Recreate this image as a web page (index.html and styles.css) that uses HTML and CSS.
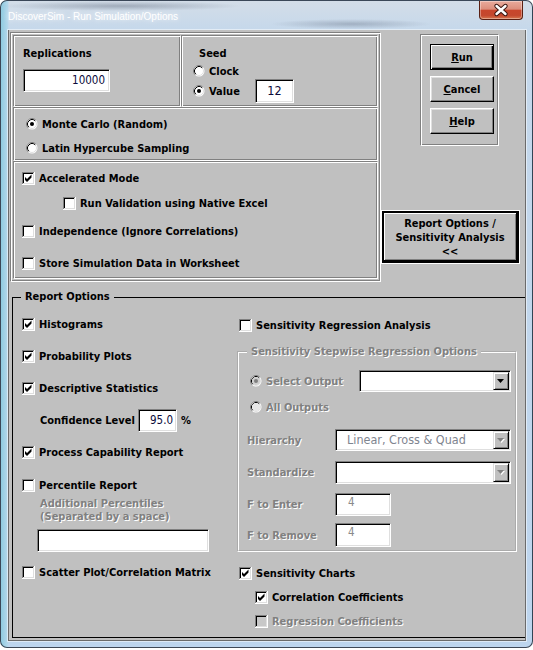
FILE: index.html
```html
<!DOCTYPE html>
<html>
<head>
<meta charset="utf-8">
<title>DiscoverSim - Run Simulation/Options</title>
<link rel="stylesheet" href="styles.css">
</head>
<body>
<svg class="sprite" aria-hidden="true">
  <defs>
    <symbol id="cb-base" viewBox="0 0 13 13">
      <rect width="13" height="13" fill="#fff"/>
      <path d="M0 0h12v1H1v11H0z" fill="#808080"/>
      <path d="M1 1h10v1H2v9H1z" fill="#000"/>
      <path d="M12 0h1v13H0v-1h12z" fill="#fff"/>
      <path d="M11 1h1v11H1v-1h10z" fill="#dfdfdf"/>
    </symbol>
    <symbol id="cb-off" viewBox="0 0 13 13">
      <use href="#cb-base"/>
    </symbol>
    <symbol id="cb-on" viewBox="0 0 13 13">
      <use href="#cb-base"/>
      <polygon points="3,5 5,7 9.5,2.5 9.5,5.5 5,10 3,8" fill="#000"/>
    </symbol>
    <symbol id="cb-dis" viewBox="0 0 13 13">
      <use href="#cb-base"/>
      <rect x="2" y="2" width="9" height="9" fill="#c8c8c8"/>
    </symbol>
    <symbol id="rb-base" viewBox="0 0 12 12">
      <circle cx="6" cy="6" r="5.5" fill="#fff"/>
      <path d="M2.11 9.89A5.5 5.5 0 0 1 9.89 2.11" fill="none" stroke="#808080"/>
      <circle cx="6" cy="6" r="4.5" fill="#fff" stroke="#dfdfdf"/>
      <path d="M2.82 9.18A4.5 4.5 0 0 1 9.18 2.82" fill="none" stroke="#000"/>
    </symbol>
    <symbol id="rb-off" viewBox="0 0 12 12">
      <use href="#rb-base"/>
    </symbol>
    <symbol id="rb-on" viewBox="0 0 12 12">
      <use href="#rb-base"/>
      <circle cx="6" cy="6" r="2" fill="#000"/>
    </symbol>
    <symbol id="rb-dis-on" viewBox="0 0 12 12">
      <use href="#rb-base"/>
      <circle cx="6" cy="6" r="4" fill="#cfcfcf"/>
      <circle cx="6" cy="6" r="2" fill="#808080"/>
    </symbol>
    <symbol id="rb-dis-off" viewBox="0 0 12 12">
      <use href="#rb-base"/>
      <circle cx="6" cy="6" r="4" fill="#e6e6e6"/>
    </symbol>
    <symbol id="arr" viewBox="0 0 8 5">
      <path d="M0 0h7L3.5 4z" fill="#000"/>
    </symbol>
    <symbol id="arr-dis" viewBox="0 0 8 5">
      <path d="M1 1h7L4.5 5z" fill="#fff"/>
      <path d="M0 0h7L3.5 4z" fill="#808080"/>
    </symbol>
  </defs>
</svg>

<div class="window">
  <div class="titlebar">
    <span class="title">DiscoverSim - Run Simulation/Options</span>
    <div class="close">
      <svg viewBox="0 0 42 18" class="close-x">
        <path d="M16.5 5L25.5 13M25.5 5L16.5 13" stroke="#3a1610" stroke-width="4.4" stroke-linecap="round"/>
        <path d="M16.5 5L25.5 13M25.5 5L16.5 13" stroke="#fff" stroke-width="2.4" stroke-linecap="round"/>
      </svg>
    </div>
  </div>

  <div class="client">
    <div class="top">
      <div class="leftframe etched">
        <div class="row1">
          <div class="box etched rep">
            <div class="lbl">Replications</div>
            <div class="tb tb-rep">10000</div>
          </div>
          <div class="box etched seed">
            <div class="lbl seed-lbl">Seed</div>
            <div class="opt seed-clock"><svg class="rb"><use href="#rb-off"/></svg><span>Clock</span></div>
            <div class="opt seed-value"><svg class="rb"><use href="#rb-on"/></svg><span class="val-lbl">Value</span><div class="tb tb-seed">12</div></div>
          </div>
        </div>
        <div class="box etched method">
          <div class="opt"><svg class="rb"><use href="#rb-on"/></svg><span>Monte Carlo (Random)</span></div>
          <div class="opt"><svg class="rb"><use href="#rb-off"/></svg><span>Latin Hypercube Sampling</span></div>
        </div>
        <div class="box etched opts">
          <div class="opt o-acc"><svg class="cb"><use href="#cb-on"/></svg><span>Accelerated Mode</span></div>
          <div class="opt o-val"><svg class="cb"><use href="#cb-off"/></svg><span>Run Validation using Native Excel</span></div>
          <div class="opt o-ind"><svg class="cb"><use href="#cb-off"/></svg><span>Independence (Ignore Correlations)</span></div>
          <div class="opt o-store"><svg class="cb"><use href="#cb-off"/></svg><span>Store Simulation Data in Worksheet</span></div>
        </div>
      </div>

      <div class="rightcol">
        <div class="btnframe etched">
          <button class="btn btn-default"><u>R</u>un</button>
          <button class="btn"><u>C</u>ancel</button>
          <button class="btn"><u>H</u>elp</button>
        </div>
        <button class="btn repbtn">Report Options /<br>Sensitivity Analysis<br>&lt;&lt;</button>
      </div>
    </div>

    <fieldset class="report">
      <legend>Report Options</legend>
      <div class="cols">
        <div class="lcol">
          <div class="opt r32"><svg class="cb"><use href="#cb-on"/></svg><span>Histograms</span></div>
          <div class="opt r32"><svg class="cb"><use href="#cb-on"/></svg><span>Probability Plots</span></div>
          <div class="opt r32"><svg class="cb"><use href="#cb-on"/></svg><span>Descriptive Statistics</span></div>
          <div class="opt r32 conf"><span class="clbl">Confidence Level</span><div class="tb tb-conf">95.0</div><span class="pct">%</span></div>
          <div class="opt r32"><svg class="cb"><use href="#cb-on"/></svg><span>Process Capability Report</span></div>
          <div class="opt perc"><svg class="cb"><use href="#cb-off"/></svg><span>Percentile Report</span></div>
          <div class="addl dis">Additional Percentiles<br>(Separated by a space)</div>
          <div class="tb tb-perc"></div>
          <div class="opt scatter"><svg class="cb"><use href="#cb-off"/></svg><span>Scatter Plot/Correlation Matrix</span></div>
        </div>

        <div class="rcol">
          <div class="opt sra"><svg class="cb"><use href="#cb-off"/></svg><span>Sensitivity Regression Analysis</span></div>
          <fieldset class="step">
            <legend class="dis">Sensitivity Stepwise Regression Options</legend>
            <div class="opt sel"><svg class="rb"><use href="#rb-dis-on"/></svg><span class="dis sel-lbl">Select Output</span>
              <div class="dd dd-sel"><span class="ddtext"></span><span class="arrow"><svg class="arr"><use href="#arr"/></svg></span></div>
            </div>
            <div class="opt allout"><svg class="rb"><use href="#rb-dis-off"/></svg><span class="dis">All Outputs</span></div>
            <div class="opt frow"><span class="dis flbl">Hierarchy</span>
              <div class="dd dd-h"><span class="ddtext">Linear, Cross &amp; Quad</span><span class="arrow"><svg class="arr"><use href="#arr-dis"/></svg></span></div>
            </div>
            <div class="opt frow"><span class="dis flbl">Standardize</span>
              <div class="dd dd-s"><span class="ddtext"></span><span class="arrow"><svg class="arr"><use href="#arr-dis"/></svg></span></div>
            </div>
            <div class="opt frow"><span class="dis flbl">F to Enter</span><div class="tb tb-f">4</div></div>
            <div class="opt frow last"><span class="dis flbl">F to Remove</span><div class="tb tb-f tb-f2">4</div></div>
          </fieldset>
          <div class="opt charts"><svg class="cb"><use href="#cb-on"/></svg><span>Sensitivity Charts</span></div>
          <div class="opt sub"><svg class="cb"><use href="#cb-on"/></svg><span>Correlation Coefficients</span></div>
          <div class="opt sub"><svg class="cb"><use href="#cb-dis"/></svg><span class="dis">Regression Coefficients</span></div>
        </div>
      </div>
    </fieldset>
  </div>
</div>
</body>
</html>
```

FILE: styles.css
```css
* { box-sizing: border-box; }

body {
  margin: 0;
  background: #fff;
  font-family: "DejaVu Sans Condensed", "DejaVu Sans", sans-serif;
  font-stretch: condensed;
  font-size: 11px;
  color: #000;
}

.sprite { position: absolute; width: 0; height: 0; overflow: hidden; }

/* ---------- window frame ---------- */
.window {
  width: 533px;
  height: 648px;
  border: 1px solid rgba(25, 35, 50, 0.8);
  border-radius: 7px;
  padding: 0 6px 6px 7px;
  display: flex;
  flex-direction: column;
  overflow: hidden;
  background:
    radial-gradient(120px 5px at 120px 5px, rgba(70, 80, 100, 0.35), transparent),
    radial-gradient(80px 5px at 350px 23px, rgba(70, 80, 100, 0.3), transparent),
    linear-gradient(90deg, #8fcbe0 0, #b6d8ec 7px, rgba(0,0,0,0) 8px),
    linear-gradient(180deg, #d3dde8 0, #c5d8eb 30px, #bdd5ee 100%);
}

.titlebar {
  height: 29px;
  display: flex;
  align-items: flex-start;
  flex-shrink: 0;
}

.title {
  margin-top: 10px;
  font-family: "Liberation Sans", Arial, sans-serif;
  font-stretch: normal;
  font-size: 10px;
  line-height: 12px;
  color: #fff;
  text-shadow: 0 0 5px rgba(255, 255, 255, 0.9);
}

.close {
  margin-left: auto;
  margin-right: 3px;
  width: 44px;
  height: 19px;
  border: 1px solid #5a2013;
  border-top: none;
  border-radius: 0 0 4px 4px;
  background: linear-gradient(180deg, #e9ab9c 0, #dc8e7c 45%, #c8462c 52%, #c4482e 80%, #d6774f 100%);
  box-shadow: inset 0 0 0 1px rgba(255, 255, 255, 0.35);
}
.close-x { display: block; width: 42px; height: 18px; }

/* ---------- client ---------- */
.client {
  height: 611px;
  background: #c0c0c0;
  border: 1px solid #6b6b6b;
  border-top: none;
  box-shadow: 0 0 0 1px rgba(255, 255, 255, 0.5);
}

.etched {
  border: 1px solid;
  border-color: #808080 #fff #fff #808080;
  box-shadow: inset 1px 1px 0 #fff, inset -1px -1px 0 #808080;
}

.top { display: flex; padding-top: 2px; }

.leftframe {
  margin-left: 1px;
  width: 371px;
  height: 250px;
  padding: 2px;
}

.row1 { display: flex; }

.lbl { font-weight: bold; line-height: 14px; height: 14px; }

.opt {
  display: flex;
  align-items: center;
  height: 16px;
  font-weight: bold;
  white-space: nowrap;
}

.cb { width: 13px; height: 13px; margin-right: 4px; flex-shrink: 0; }
.rb { width: 12px; height: 12px; margin-right: 4px; flex-shrink: 0; }

.tb {
  background: #fff;
  border: 1px solid;
  border-color: #808080 #fff #fff #808080;
  box-shadow: inset 1px 1px 0 #000, inset -1px -1px 0 #dfdfdf;
  font-weight: normal;
  font-size: 11.5px;
  color: #0b0b3b;
}

.rep { width: 168px; height: 72px; padding: 11px 0 0 9px; }
.tb-rep {
  width: 87px;
  height: 23px;
  margin-top: 8px;
  text-align: right;
  padding-right: 4px;
  line-height: 21px;
}

.seed { width: 197px; height: 72px; padding: 11px 0 0 11px; }
.seed-lbl { margin-left: 6px; }
.seed-clock { margin-top: 2px; }
.seed-value { height: 24px; }
.val-lbl { width: 46px; }
.tb-seed {
  width: 39px;
  height: 24px;
  text-align: center;
  line-height: 22px;
  font-size: 12.5px;
}

.method {
  width: 365px;
  height: 54px;
  padding: 8px 0 0 12px;
  display: flex;
  flex-direction: column;
  gap: 8px;
}

.opts { width: 365px; height: 118px; padding: 8px 0 0 8px; }
.o-val { margin-top: 9px; margin-left: 41px; }
.o-ind { margin-top: 12px; }
.o-store { margin-top: 16px; }

/* ---------- buttons ---------- */
.rightcol { display: flex; flex-direction: column; align-items: flex-start; }

.btnframe {
  margin: 2px 0 0 39px;
  width: 79px;
  height: 112px;
  padding: 9px 0 0 9px;
  display: flex;
  flex-direction: column;
  gap: 6px;
}

.btn {
  width: 64px;
  height: 26px;
  padding: 0;
  margin: 0;
  background: #c0c0c0;
  border: 1px solid;
  border-color: #fff #000 #000 #fff;
  box-shadow: inset -1px -1px 0 #808080, inset 1px 1px 0 #dfdfdf;
  font: inherit;
  font-weight: bold;
  color: #000;
  display: flex;
  align-items: center;
  justify-content: center;
}

.btn-default {
  border-color: #000;
  box-shadow: inset 1px 1px 0 #fff, inset -1px -1px 0 #000, inset -2px -2px 0 #808080;
}

.repbtn {
  width: 137px;
  height: 52px;
  margin: 65px 0 0 1px;
  padding-top: 2px;
  border: 2px solid #000;
  border-right-width: 3px;
  border-bottom-width: 3px;
  box-shadow: 0 0 0 1px #fff, inset 1px 1px 0 #fff, inset -1px -1px 0 #808080;
  line-height: 14px;
  text-align: center;
}

/* ---------- report options ---------- */
.report {
  margin: 8px 0 0 3px;
  padding: 0;
  width: 513px;
  height: 348px;
  min-width: 0;
  border: 1px solid #000;
  border-right: none;
}

.report > legend {
  margin-left: 8px;
  padding: 0 4px;
  font-weight: bold;
  line-height: 14px;
}

.dis { color: #808080; text-shadow: 1px 1px 0 #fff; }

.cols { display: flex; padding: 4px 0 0 9px; }

.lcol { width: 215px; display: flex; flex-direction: column; }
.r32 { height: 32px; }

.conf { padding-left: 18px; }
.clbl { width: 98px; }
.tb-conf {
  width: 39px;
  height: 23px;
  text-align: right;
  padding-right: 3px;
  line-height: 21px;
}
.pct { margin-left: 4px; }

.perc { margin-top: 5px; height: 24px; }
.addl { padding-left: 18px; line-height: 13px; font-weight: bold; }
.tb-perc { margin: 6px 0 0 15px; width: 172px; height: 23px; }
.scatter { margin-top: 10px; height: 20px; }

.rcol { width: 280px; display: flex; flex-direction: column; }
.sra { height: 34px; padding-left: 2px; }

.step {
  margin: 3px 0 0 0;
  padding: 11px 0 0 0;
  width: 280px;
  height: 207px;
  min-width: 0;
  border: 2px groove #fff;
}
.step > legend {
  margin-left: 8px;
  padding: 0 4px;
  line-height: 14px;
  font-weight: bold;
}

.sel { height: 22px; padding-left: 11px; }
.sel-lbl { width: 93px; }
.allout { margin-top: 4px; margin-bottom: 6px; height: 22px; padding-left: 11px; }
.frow { height: 32px; padding-left: 8px; }
.frow.last { height: 30px; }
.flbl { width: 88px; }

.dd {
  display: flex;
  background: #fff;
  border: 1px solid;
  border-color: #808080 #fff #fff #808080;
  box-shadow: inset 1px 1px 0 #000, inset -1px -1px 0 #dfdfdf;
  padding: 1px;
}
.dd-sel { width: 152px; height: 22px; }
.dd-h { width: 176px; height: 22px; }
.dd-s { width: 176px; height: 23px; }

.ddtext {
  flex: 1;
  padding-left: 10px;
  color: #7f8590;
  font-weight: normal;
  font-size: 12.5px;
  line-height: 18px;
}

.arrow {
  width: 16px;
  height: 100%;
  background: #c0c0c0;
  border: 1px solid;
  border-color: #dfdfdf #000 #000 #dfdfdf;
  box-shadow: inset 1px 1px 0 #fff, inset -1px -1px 0 #808080;
  display: flex;
  align-items: center;
  justify-content: center;
}
.arr { width: 8px; height: 5px; }

.tb-f {
  width: 56px;
  height: 23px;
  color: #8a8a8a;
  padding-left: 12px;
  line-height: 17px;
}
.tb-f2 { height: 24px; }

.charts { margin-top: 9px; height: 24px; padding-left: 2px; }
.sub { height: 24px; padding-left: 18px; }
```
